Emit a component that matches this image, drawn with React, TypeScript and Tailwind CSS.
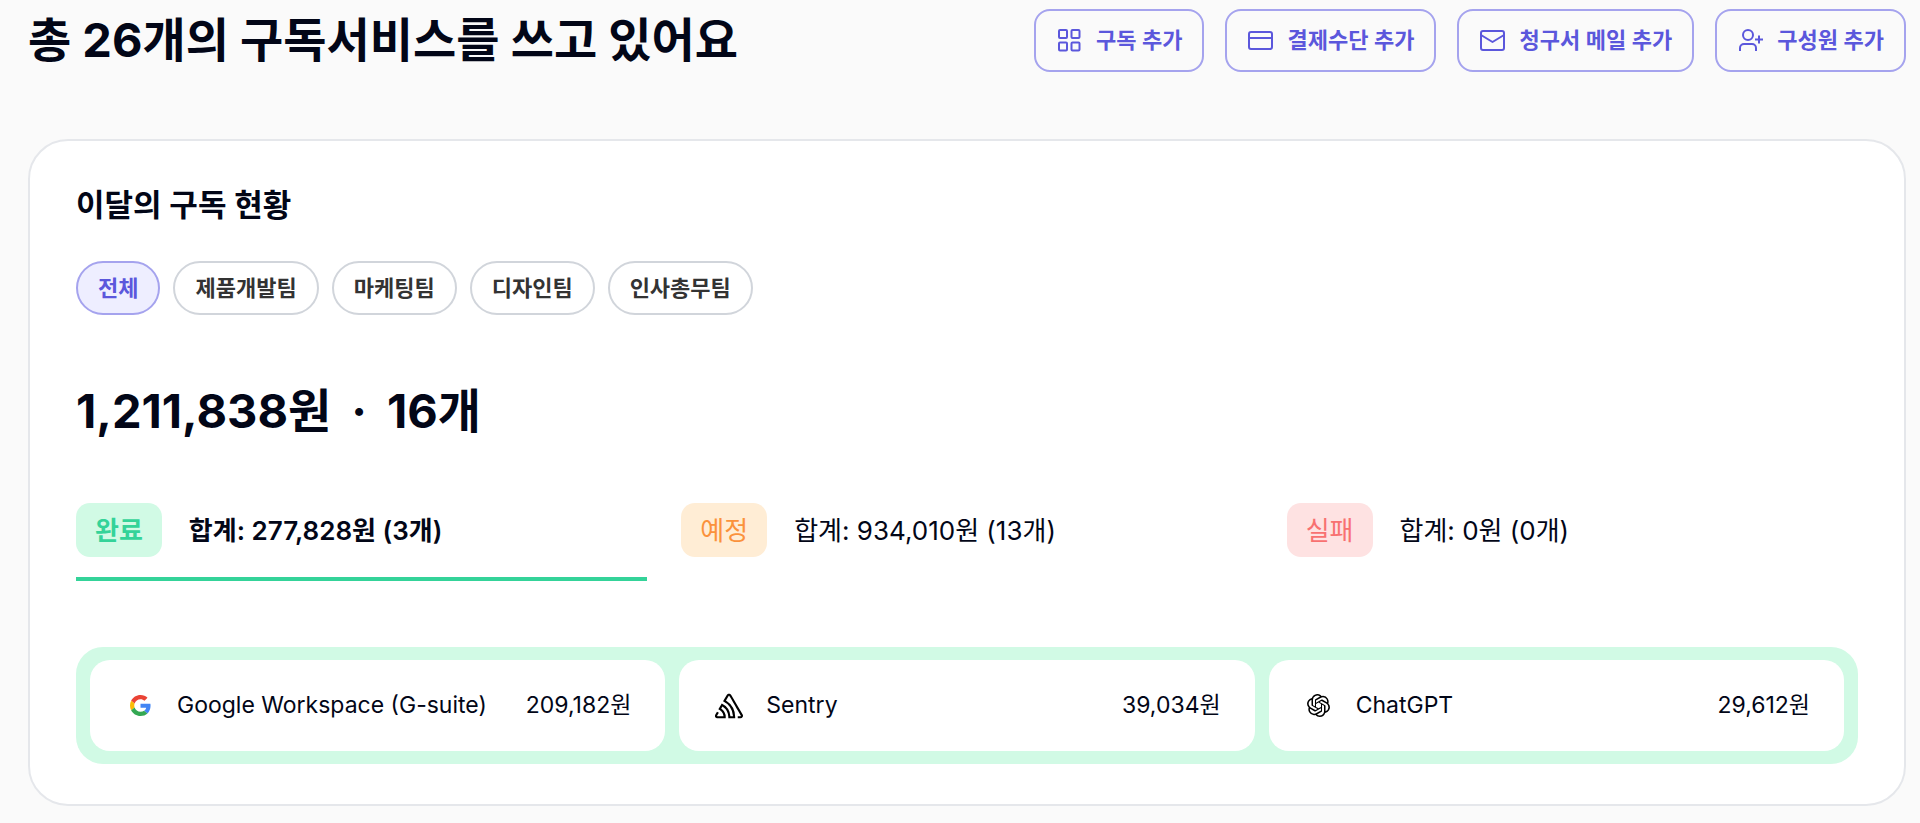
import { useState } from "react";
import type { ReactNode } from "react";
import clsx from "clsx";
import { SiOpenai, SiSentry } from "react-icons/si";

interface Action {
  label: string;
  icon: ReactNode;
}

interface Status {
  key: string;
  label: string;
  summary: string;
  badge: string;
}

interface Service {
  name: string;
  price: string;
  icon: ReactNode;
}

const ACTIONS: Action[] = [
  {
    label: "구독 추가",
    icon: (
      <>
        <rect x="3" y="3" width="8" height="8" rx="1" />
        <rect x="15.500" y="3" width="8" height="8" rx="1" />
        <rect x="3" y="15.500" width="8" height="8" rx="1" />
        <rect x="15.500" y="15.500" width="8" height="8" rx="1" />
      </>
    ),
  },
  {
    label: "결제수단 추가",
    icon: (
      <>
        <rect x="2" y="5" width="23" height="17" rx="2" />
        <path d="M2 11h23" />
      </>
    ),
  },
  {
    label: "청구서 메일 추가",
    icon: (
      <>
        <rect x="2" y="4" width="23" height="19" rx="2" />
        <path d="M2 8l11.5 7L25 8" />
      </>
    ),
  },
  {
    label: "구성원 추가",
    icon: (
      <>
        <circle cx="11" cy="8" r="5" />
        <path d="M3 24v-3a4 4 0 0 1 4-4h8a4 4 0 0 1 4 4v3" />
        <path d="M18 12.500h8M22 8.500v8" />
      </>
    ),
  },
];

const TEAMS = ["전체", "제품개발팀", "마케팅팀", "디자인팀", "인사총무팀"];

const STATUSES: Status[] = [
  {
    key: "done",
    label: "완료",
    summary: "합계: 277,828원 (3개)",
    badge: "bg-[#d1fae5] text-[#34d399]",
  },
  {
    key: "planned",
    label: "예정",
    summary: "합계: 934,010원 (13개)",
    badge: "bg-[#ffedd5] text-[#fb923c]",
  },
  {
    key: "failed",
    label: "실패",
    summary: "합계: 0원 (0개)",
    badge: "bg-[#fee2e2] text-[#f87171]",
  },
];

function GoogleLogo() {
  return (
    <svg width="21" height="21" viewBox="0 0 48 48" aria-hidden="true">
      <path
        fill="#EA4335"
        d="M24 9.500c3.540 0 6.710 1.220 9.210 3.600l6.850-6.850C35.900 2.380 30.470 0 24 0 14.620 0 6.510 5.380 2.560 13.220l7.980 6.190C12.430 13.720 17.740 9.500 24 9.500z"
      />
      <path
        fill="#4285F4"
        d="M46.980 24.550c0-1.570-.15-3.090-.38-4.550H24v9.020h12.940c-.58 2.960-2.260 5.480-4.780 7.180l7.730 6c4.510-4.180 7.090-10.360 7.090-17.650z"
      />
      <path
        fill="#FBBC05"
        d="M10.530 28.590c-.48-1.450-.76-2.990-.76-4.590s.27-3.140.76-4.590l-7.980-6.190C.92 16.460 0 20.120 0 24s.92 7.540 2.560 10.780l7.970-6.190z"
      />
      <path
        fill="#34A853"
        d="M24 48c6.480 0 11.930-2.130 15.890-5.810l-7.730-6c-2.150 1.450-4.920 2.300-8.160 2.300-6.260 0-11.570-4.220-13.470-9.910l-7.980 6.190C6.510 42.620 14.620 48 24 48z"
      />
    </svg>
  );
}

const SERVICES: Service[] = [
  { name: "Google Workspace (G-suite)", price: "209,182원", icon: <GoogleLogo /> },
  { name: "Sentry", price: "39,034원", icon: <SiSentry size={28} /> },
  { name: "ChatGPT", price: "29,612원", icon: <SiOpenai size={23} /> },
];

function ActionButton({ label, icon }: Action) {
  return (
    <button
      type="button"
      className="flex h-[63px] items-center gap-[13px] rounded-2xl border-2 border-[#a5a3ee] px-5 text-[22px] font-semibold text-[#5b57dc]"
    >
      <svg
        width="27"
        height="27"
        viewBox="0 0 27 27"
        fill="none"
        stroke="currentColor"
        strokeWidth="2"
        strokeLinejoin="round"
        aria-hidden="true"
      >
        {icon}
      </svg>
      {label}
    </button>
  );
}

function ServiceCard({ name, price, icon }: Service) {
  return (
    <li className="flex h-[91px] items-center gap-[23px] rounded-[20px] bg-white pr-[34px] pl-9">
      <span className="flex w-7 shrink-0 justify-center text-black">{icon}</span>
      <span className="flex-1 truncate">{name}</span>
      <span className="shrink-0">{price}</span>
    </li>
  );
}

export default function App() {
  const [team, setTeam] = useState(TEAMS[0]);
  const [status, setStatus] = useState(STATUSES[0].key);

  return (
    <main className="min-h-screen bg-[#fafafa] pt-2 pr-3.5 pb-[17px] pl-7 font-['Inter','Noto_Sans_CJK_KR',sans-serif] text-[#020617]">
      <header className="flex items-center justify-between">
        <h1 className="text-[47px] leading-[64px] font-bold">총 26개의 구독서비스를 쓰고 있어요</h1>
        <div className="flex gap-[21px]">
          {ACTIONS.map((action) => (
            <ActionButton key={action.label} {...action} />
          ))}
        </div>
      </header>

      <section className="mt-[67px] rounded-[40px] border-2 border-[#e5e7eb] bg-white px-[46px] pt-10 pb-10">
        <h2 className="text-[31px] leading-[48px] font-semibold">이달의 구독 현황</h2>

        <div className="mt-8 flex gap-[13px]">
          {TEAMS.map((name) => (
            <button
              key={name}
              type="button"
              aria-pressed={team === name}
              onClick={() => setTeam(name)}
              className={clsx(
                "h-[54px] rounded-full border-2 px-5 text-[22px] font-semibold",
                team === name
                  ? "border-[#a5a3ee] bg-[#eeeeff] text-[#5b57dc]"
                  : "border-[#d1d5db] bg-white text-[#333333]",
              )}
            >
              {name}
            </button>
          ))}
        </div>

        <p className="mt-16 flex gap-5 text-[47px] leading-[64px] font-bold">
          <span>1,211,838원</span>
          <span>·</span>
          <span>16개</span>
        </p>

        <div className="mt-[60px] grid grid-cols-3 gap-[34px]">
          {STATUSES.map(({ key, label, summary, badge }) => (
            <button
              key={key}
              type="button"
              aria-pressed={status === key}
              onClick={() => setStatus(key)}
              className={clsx(
                "flex items-center gap-[27px] border-b-4 pb-5 text-[26px]",
                status === key ? "border-[#34d399] font-semibold" : "border-transparent",
              )}
            >
              <span className={clsx("flex h-[54px] items-center rounded-[14px] px-[19px]", badge)}>{label}</span>
              <span>{summary}</span>
            </button>
          ))}
        </div>

        <ul className="mt-[66px] grid grid-cols-3 gap-3.5 rounded-[27px] bg-[#d1fae5] px-3.5 py-[13px] text-[23px]">
          {SERVICES.map((service) => (
            <ServiceCard key={service.name} {...service} />
          ))}
        </ul>
      </section>
    </main>
  );
}
